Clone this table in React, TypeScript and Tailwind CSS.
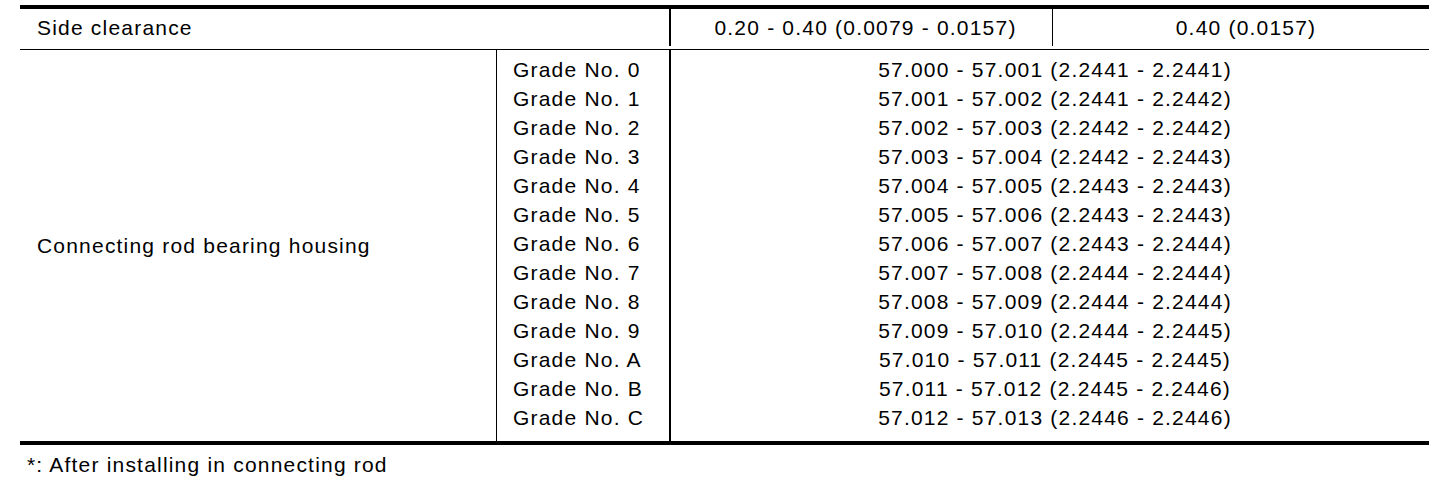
const grades = [
  ["0", "57.000 - 57.001 (2.2441 - 2.2441)"],
  ["1", "57.001 - 57.002 (2.2441 - 2.2442)"],
  ["2", "57.002 - 57.003 (2.2442 - 2.2442)"],
  ["3", "57.003 - 57.004 (2.2442 - 2.2443)"],
  ["4", "57.004 - 57.005 (2.2443 - 2.2443)"],
  ["5", "57.005 - 57.006 (2.2443 - 2.2443)"],
  ["6", "57.006 - 57.007 (2.2443 - 2.2444)"],
  ["7", "57.007 - 57.008 (2.2444 - 2.2444)"],
  ["8", "57.008 - 57.009 (2.2444 - 2.2444)"],
  ["9", "57.009 - 57.010 (2.2444 - 2.2445)"],
  ["A", "57.010 - 57.011 (2.2445 - 2.2445)"],
  ["B", "57.011 - 57.012 (2.2445 - 2.2446)"],
  ["C", "57.012 - 57.013 (2.2446 - 2.2446)"],
];

export default function App() {
  return (
    <div className="w-[1440px] h-[482px] bg-white text-black font-['Liberation_Sans',Arial,sans-serif] text-[21px] tracking-[1.2px] pt-[5px]">
      <div className="ml-[20px] w-[1409px] border-t-4 border-b-4 border-black">
        {/* header row */}
        <div className="grid grid-cols-[649px_383px_377px] h-[41px] pb-[3px] border-b border-black">
          <div className="flex items-center pl-[17px]">Side clearance</div>
          <div className="flex items-center justify-center pl-[8px] border-l-2 border-black">
            0.20 - 0.40 (0.0079 - 0.0157)
          </div>
          <div className="flex items-center justify-center pl-[10px] border-l border-black">
            0.40 (0.0157)
          </div>
        </div>
        {/* grades */}
        <div className="grid grid-cols-[476px_173px_760px] h-[391px]">
          <div className="flex items-center pl-[17px]">Connecting rod bearing housing</div>
          <div className="border-l border-black pl-[16px] pt-[5px] leading-[29px]">
            {grades.map(([g]) => (
              <div key={g}>Grade No. {g}</div>
            ))}
          </div>
          <div className="border-l-2 border-black pt-[5px] pl-[10px] leading-[29px] text-center">
            {grades.map(([g, v]) => (
              <div key={g}>{v}</div>
            ))}
          </div>
        </div>
      </div>
      <div className="pl-[27px] mt-[5px] leading-[29px]">*: After installing in connecting rod</div>
    </div>
  );
}
